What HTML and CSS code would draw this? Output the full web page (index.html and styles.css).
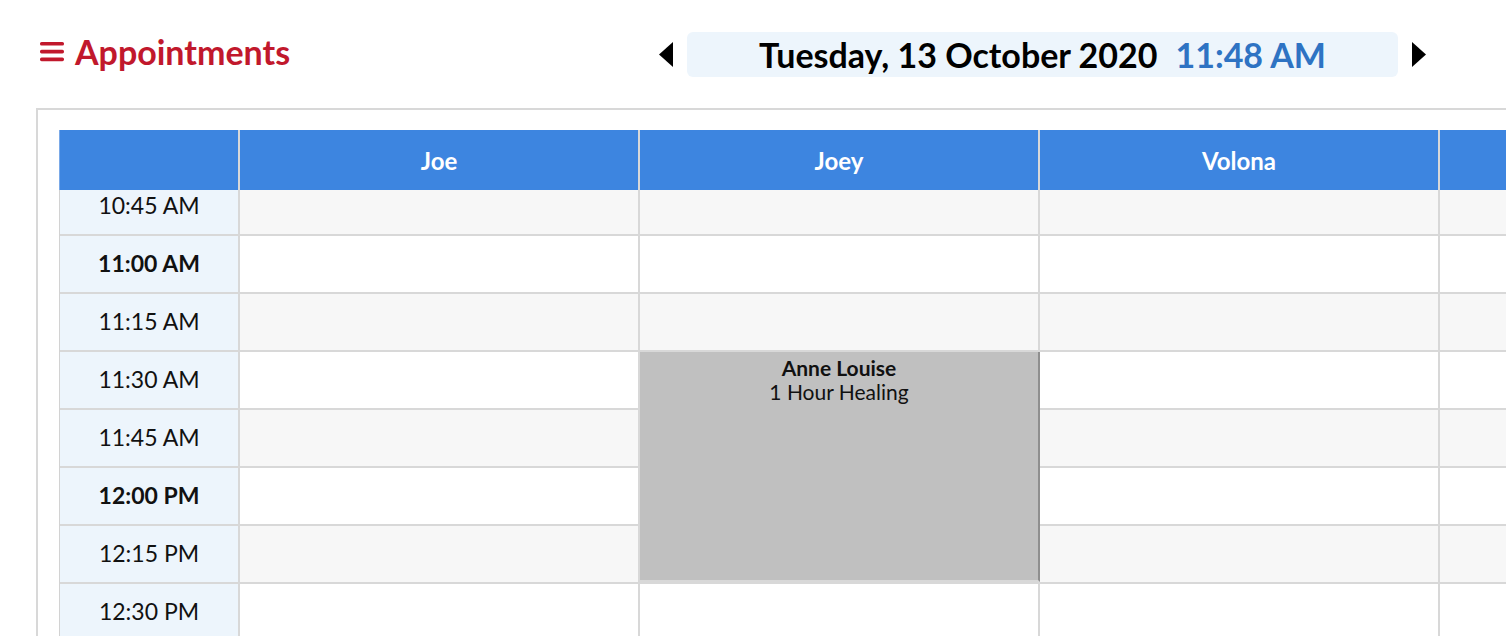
FILE: index.html
```html
<!DOCTYPE html>
<html lang="en">
<head>
  <meta charset="UTF-8" />
  <meta name="viewport" content="width=device-width, initial-scale=1.0"/>
  <title>Appointments</title>
  <link rel="stylesheet" href="styles.css">
</head>
<body>
  <header class="topbar">
    <h1 class="title">
      <svg class="menu-icon" width="24" height="20" viewBox="0 0 24 20">
        <rect x="0" y="0" width="24" height="3.6" rx="1.6" />
        <rect x="0" y="7.8" width="24" height="3.6" rx="1.6" />
        <rect x="0" y="15.6" width="24" height="3.6" rx="1.6" />
      </svg>
      Appointments
    </h1>

    <div class="date-nav">
      <button class="arrow" type="button">
        <svg width="14" height="25" viewBox="0 0 14 25"><path d="M14 0 L0 12.5 L14 25 Z" /></svg>
      </button>
      <div class="date-box">
        <span class="date">Tuesday, 13 October 2020</span>
        <span class="clock">11:48 AM</span>
      </div>
      <button class="arrow" type="button">
        <svg width="14" height="25" viewBox="0 0 14 25"><path d="M0 0 L14 12.5 L0 25 Z" /></svg>
      </button>
    </div>
  </header>

  <main class="schedule">
    <div class="row head">
      <div class="cell time"></div>
      <div class="cell">Joe</div>
      <div class="cell">Joey</div>
      <div class="cell">Volona</div>
      <div class="cell"></div>
    </div>

    <div class="rows-clip">
      <div class="rows">
        <div class="row alt">
          <div class="cell time">10:45 AM</div>
          <div class="cell"></div><div class="cell"></div><div class="cell"></div><div class="cell"></div>
        </div>
        <div class="row">
          <div class="cell time hour">11:00 AM</div>
          <div class="cell"></div><div class="cell"></div><div class="cell"></div><div class="cell"></div>
        </div>
        <div class="row alt">
          <div class="cell time">11:15 AM</div>
          <div class="cell"></div><div class="cell"></div><div class="cell"></div><div class="cell"></div>
        </div>
        <div class="row">
          <div class="cell time">11:30 AM</div>
          <div class="cell"></div>
          <div class="cell slot">
            <div class="appt">
              <strong>Anne Louise</strong><br>
              1 Hour Healing
            </div>
          </div>
          <div class="cell"></div><div class="cell"></div>
        </div>
        <div class="row alt">
          <div class="cell time">11:45 AM</div>
          <div class="cell"></div><div class="cell"></div><div class="cell"></div><div class="cell"></div>
        </div>
        <div class="row">
          <div class="cell time hour">12:00 PM</div>
          <div class="cell"></div><div class="cell"></div><div class="cell"></div><div class="cell"></div>
        </div>
        <div class="row alt">
          <div class="cell time">12:15 PM</div>
          <div class="cell"></div><div class="cell"></div><div class="cell"></div><div class="cell"></div>
        </div>
        <div class="row">
          <div class="cell time">12:30 PM</div>
          <div class="cell"></div><div class="cell"></div><div class="cell"></div><div class="cell"></div>
        </div>
      </div>
    </div>
  </main>
</body>
</html>
```

FILE: styles.css
```css
html, body {
  overflow: hidden;
}

body {
  font-family: 'Lato', 'Open Sans', sans-serif;
  background: #fff;
  margin: 0;
  color: #111;
}

.topbar {
  display: flex;
  align-items: center;
  height: 45px;
  padding: 32px 80px 0 40px;
  margin-bottom: 31px;
}

.title {
  display: flex;
  align-items: center;
  gap: 11px;
  margin: -6px 0 0 0;
  font-size: 34px;
  font-weight: 700;
  color: #c1182c;
}

.menu-icon {
  fill: #c1182c;
}

.date-nav {
  margin-left: auto;
  display: flex;
  align-items: center;
  gap: 14px;
}

.arrow {
  width: 14px;
  height: 25px;
  padding: 0;
  border: none;
  background: none;
  cursor: pointer;
  display: flex;
}

.arrow svg {
  fill: #000;
}

.date-box {
  width: 711px;
  height: 45px;
  background: #edf5fc;
  border-radius: 6px;
  display: flex;
  align-items: center;
  justify-content: center;
  gap: 18px;
  font-size: 34px;
  font-weight: 700;
  color: #000;
}

.date-box .clock {
  color: #2e73c3;
}

.schedule {
  margin-left: 36px;
  width: 1800px;
  min-height: 600px;
  border: 2px solid #d8d8d8;
  border-right: none;
  padding: 20px 0 0 21px;
}

.row {
  display: flex;
  border-left: 1px solid #d2d2d2;
}

.row.head {
  border-left-color: #7aa9e8;
}

.cell {
  flex: none;
  width: 398px;
  border-right: 2px solid #d8d8d8;
  display: flex;
  align-items: center;
  justify-content: center;
}

.cell.time {
  width: 178px;
  background: #edf5fc;
  font-size: 23px;
}

.cell.hour {
  font-weight: 700;
}

.head .cell {
  height: 60px;
  background: #3d85e0;
  color: #fff;
  font-size: 24px;
  font-weight: 700;
}

.rows-clip {
  overflow: hidden;
}

.rows {
  margin-top: -12px;
}

.rows .cell {
  height: 56px;
  border-bottom: 2px solid #d8d8d8;
}

.rows .cell.time {
  height: 53px;
  padding-bottom: 3px;
}

.row.alt .cell {
  background: #f7f7f7;
}

.row.alt .cell.time {
  background: #edf5fc;
}

.slot {
  position: relative;
}

.appt {
  position: absolute;
  top: 0;
  left: 0;
  width: 400px;
  height: 230px;
  box-sizing: border-box;
  padding-top: 4px;
  background: #c0c0c0;
  border-right: 2px solid #8f8f8f;
  border-bottom: 2px solid #d8d8d8;
  text-align: center;
  font-size: 21px;
  line-height: 24px;
  color: #111;
  z-index: 1;
}
```
